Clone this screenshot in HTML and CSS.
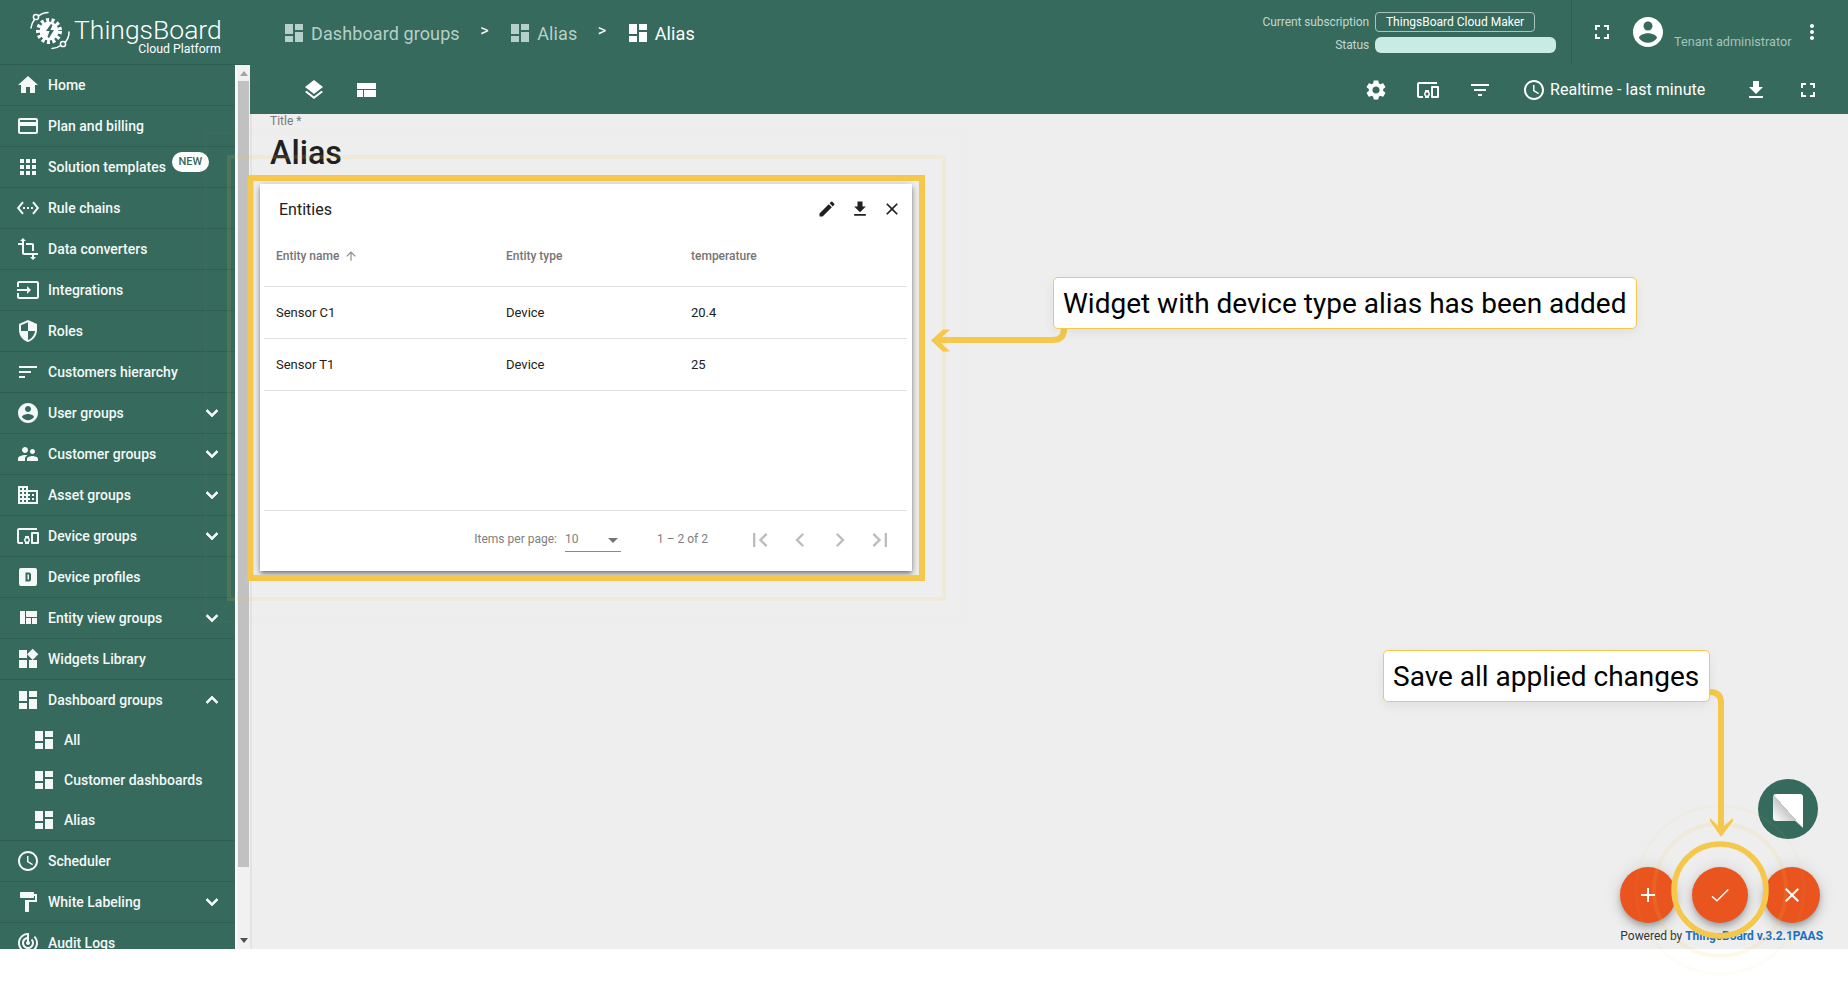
FILE: index.html
```html
<!DOCTYPE html>
<html lang="en">
<head>
<meta charset="utf-8">
<title>ThingsBoard - Alias</title>
<link rel="stylesheet" href="styles.css">
</head>
<body>
<svg class="sprite" aria-hidden="true">
  <symbol id="i-home" viewBox="0 0 24 24"><path d="M10 20v-6h4v6h5v-8h3L12 3 2 12h3v8z"/></symbol>
  <symbol id="i-card" viewBox="0 0 24 24"><path d="M20 4H4c-1.11 0-1.99.89-1.99 2L2 18c0 1.11.89 2 2 2h16c1.11 0 2-.89 2-2V6c0-1.11-.89-2-2-2zm0 14H4v-6h16v6zm0-10H4V6h16v2z"/></symbol>
  <symbol id="i-apps" viewBox="0 0 24 24"><path d="M4 8h4V4H4v4zm6 12h4v-4h-4v4zm-6 0h4v-4H4v4zm0-6h4v-4H4v4zm6 0h4v-4h-4v4zm6-10v4h4V4h-4zm-6 4h4V4h-4v4zm6 6h4v-4h-4v4zm0 6h4v-4h-4v4z"/></symbol>
  <symbol id="i-rule" viewBox="0 0 24 24"><path d="M7.77 6.76L6.23 5.48.82 12l5.41 6.52 1.54-1.28L3.42 12l4.35-5.24zM7 13h2v-2H7v2zm10-2h-2v2h2v-2zm-6 2h2v-2h-2v2zm6.77-7.52l-1.54 1.28L20.58 12l-4.35 5.24 1.54 1.28L23.18 12l-5.41-6.52z"/></symbol>
  <symbol id="i-transform" viewBox="0 0 24 24"><path d="M22 18v-2H8V4h2L7 1 4 4h2v2H2v2h4v8c0 1.1.9 2 2 2h8v2h-2l3 3 3-3h-2v-2h4zM10 8h6v6h2V8c0-1.1-.9-2-2-2h-6v2z"/></symbol>
  <symbol id="i-input" viewBox="0 0 24 24"><path d="M21 3.01H3c-1.1 0-2 .9-2 2V9h2V4.99h18v14.03H3V15H1v4.01c0 1.1.9 1.98 2 1.98h18c1.1 0 2-.88 2-1.98v-14c0-1.11-.9-2-2-2zM11 16l4-4-4-4v3H1v2h10v3z"/></symbol>
  <symbol id="i-security" viewBox="0 0 24 24"><path d="M12 1L3 5v6c0 5.55 3.84 10.74 9 12 5.16-1.26 9-6.45 9-12V5l-9-4zm0 10.99h7c-.53 4.12-3.28 7.79-7 8.94V12H5V6.3l7-3.11v8.8z"/></symbol>
  <symbol id="i-sort" viewBox="0 0 24 24"><path d="M3 18h6v-2H3v2zM3 6v2h18V6H3zm0 7h12v-2H3v2z"/></symbol>
  <symbol id="i-account" viewBox="0 0 24 24"><path d="M12 2C6.48 2 2 6.48 2 12s4.48 10 10 10 10-4.48 10-10S17.52 2 12 2zm0 3c1.66 0 3 1.34 3 3s-1.34 3-3 3-3-1.34-3-3 1.34-3 3-3zm0 14.2c-2.5 0-4.71-1.28-6-3.22.03-1.99 4-3.08 6-3.08 1.99 0 5.97 1.09 6 3.08-1.29 1.94-3.5 3.22-6 3.22z"/></symbol>
  <symbol id="i-super" viewBox="0 0 24 24"><path d="M16.5 12c1.38 0 2.49-1.12 2.49-2.5S17.88 7 16.5 7C15.12 7 14 8.12 14 9.5s1.12 2.5 2.5 2.5zM9 11c1.66 0 2.99-1.34 2.99-3S10.66 5 9 5C7.34 5 6 6.34 6 8s1.34 3 3 3zm7.5 3c-1.83 0-5.5.92-5.5 2.75V19h11v-2.25c0-1.83-3.67-2.75-5.5-2.75zM9 13c-2.33 0-7 1.17-7 3.5V19h7v-2.25c0-.85.33-2.34 2.37-3.47C10.5 13.1 9.66 13 9 13z"/></symbol>
  <symbol id="i-domain" viewBox="0 0 24 24"><path d="M12 7V3H2v18h20V7H10zM6 19H4v-2h2v2zm0-4H4v-2h2v2zm0-4H4V9h2v2zm0-4H4V5h2v2zm4 12H8v-2h2v2zm0-4H8v-2h2v2zm0-4H8V9h2v2zm0-4H8V5h2v2zm10 12h-8v-2h2v-2h-2v-2h2v-2h-2V9h8v10zm-2-8h-2v2h2v-2zm0 4h-2v2h2v-2z"/></symbol>
  <symbol id="i-devices" viewBox="0 0 24 24"><path d="M3 6h18V4H3c-1.1 0-2 .9-2 2v12c0 1.1.9 2 2 2h4v-2H3V6zm10 6H9v1.78c-.61.55-1 1.33-1 2.22s.39 1.67 1 2.22V20h4v-1.78c.61-.55 1-1.34 1-2.22s-.39-1.67-1-2.22V12zm-2 5.5c-.83 0-1.5-.67-1.5-1.5s.67-1.5 1.5-1.5 1.5.67 1.5 1.5-.67 1.5-1.5 1.5zM22 8h-6c-.5 0-1 .5-1 1v10c0 .5.5 1 1 1h6c.5 0 1-.5 1-1V9c0-.5-.5-1-1-1zm-1 10h-4v-8h4v8z"/></symbol>
  <symbol id="i-dbox" viewBox="0 0 24 24"><path fill-rule="evenodd" d="M5 3h14a2 2 0 0 1 2 2v14a2 2 0 0 1-2 2H5a2 2 0 0 1-2-2V5a2 2 0 0 1 2-2zm4.5 4.5v9h3.5a2 2 0 0 0 2-2v-5a2 2 0 0 0-2-2H9.500zm2 2h1.500v5h-1.500v-5z"/></symbol>
  <symbol id="i-quilt" viewBox="0 0 24 24"><path d="M10 18h5v-6h-5v6zm-6 0h5V5H4v13zm12 0h5v-6h-5v6zM10 5v6h11V5H10z"/></symbol>
  <symbol id="i-widgets" viewBox="0 0 24 24"><path d="M13 13v8h8v-8h-8zM3 21h8v-8H3v8zM3 3v8h8V3H3zm13.660-1.310L11 7.340 16.660 13l5.660-5.660-5.660-5.650z"/></symbol>
  <symbol id="i-dash" viewBox="0 0 24 24"><path d="M3 13h8V3H3v10zm0 8h8v-6H3v6zm10 0h8V11h-8v10zm0-18v6h8V3h-8z"/></symbol>
  <symbol id="i-clock" viewBox="0 0 24 24"><path d="M11.990 2C6.470 2 2 6.480 2 12s4.470 10 9.990 10C17.520 22 22 17.520 22 12S17.520 2 11.990 2zM12 20c-4.420 0-8-3.580-8-8s3.580-8 8-8 8 3.580 8 8-3.580 8-8 8zm.5-13H11v6l5.250 3.150.75-1.230-4.500-2.670z"/></symbol>
  <symbol id="i-paint" viewBox="0 0 24 24"><path d="M18 4V3c0-.55-.45-1-1-1H5c-.55 0-1 .45-1 1v4c0 .55.45 1 1 1h12c.55 0 1-.45 1-1V6h1v4H9v11c0 .55.45 1 1 1h2c.55 0 1-.45 1-1v-9h8V4h-3z"/></symbol>
  <symbol id="i-track" viewBox="0 0 24 24"><path d="M19.070 4.930l-1.410 1.410C19.100 7.790 20 9.790 20 12c0 4.420-3.580 8-8 8s-8-3.580-8-8c0-4.080 3.050-7.440 7-7.930v2.020C8.160 6.570 6 9.030 6 12c0 3.310 2.690 6 6 6s6-2.690 6-6c0-1.660-.67-3.160-1.760-4.240l-1.410 1.410C15.550 9.900 16 10.900 16 12c0 2.210-1.790 4-4 4s-4-1.790-4-4c0-1.860 1.280-3.410 3-3.860v2.140c-.6.35-1 .98-1 1.720 0 1.100.9 2 2 2s2-.9 2-2c0-.74-.4-1.380-1-1.720V2h-1C6.480 2 2 6.480 2 12s4.480 10 10 10 10-4.480 10-10c0-2.760-1.120-5.260-2.930-7.070z"/></symbol>
  <symbol id="i-more" viewBox="0 0 24 24"><path d="M16.590 8.590L12 13.170 7.410 8.590 6 10l6 6 6-6z"/></symbol>
  <symbol id="i-less" viewBox="0 0 24 24"><path d="M12 8l-6 6 1.410 1.410L12 10.830l4.590 4.580L18 14z"/></symbol>
  <symbol id="i-layers" viewBox="0 0 24 24"><path d="M11.990 18.540l-7.370-5.730L3 14.070l9 7 9-7-1.630-1.270-7.380 5.740zM12 16l7.360-5.730L21 9l-9-7-9 7 1.630 1.270L12 16z"/></symbol>
  <symbol id="i-compact" viewBox="0 0 24 24"><path d="M3 19h6v-7H3v7zm7 0h12v-7H10v7zM3 5v6h19V5H3z"/></symbol>
  <symbol id="i-settings" viewBox="0 0 24 24"><path d="M19.140 12.940c.04-.3.06-.61.06-.94 0-.32-.02-.64-.07-.94l2.030-1.580c.18-.14.23-.41.12-.61l-1.920-3.320c-.12-.22-.37-.29-.59-.22l-2.390.96c-.5-.38-1.030-.7-1.620-.94l-.36-2.540c-.04-.24-.24-.41-.48-.41h-3.840c-.24 0-.43.17-.47.41l-.36 2.540c-.59.24-1.130.57-1.620.94l-2.390-.96c-.22-.08-.47 0-.59.22L2.740 8.870c-.12.21-.08.47.12.61l2.030 1.580c-.05.3-.09.63-.09.94s.02.64.07.94l-2.030 1.580c-.18.14-.23.41-.12.61l1.920 3.320c.12.22.37.29.59.22l2.390-.96c.5.38 1.030.7 1.620.94l.36 2.540c.05.24.24.41.48.41h3.840c.24 0 .44-.17.47-.41l.36-2.540c.59-.24 1.130-.56 1.620-.94l2.390.96c.22.08.47 0 .59-.22l1.920-3.320c.12-.22.07-.47-.12-.61l-2.010-1.580zM12 15.600c-1.980 0-3.600-1.620-3.600-3.600s1.620-3.600 3.600-3.600 3.600 1.620 3.600 3.600-1.620 3.600-3.600 3.600z"/></symbol>
  <symbol id="i-filter" viewBox="0 0 24 24"><path d="M10 18h4v-2h-4v2zM3 6v2h18V6H3zm3 7h12v-2H6v2z"/></symbol>
  <symbol id="i-download" viewBox="0 0 24 24"><path d="M19 9h-4V3H9v6H5l7 7 7-7zM5 18v2h14v-2H5z"/></symbol>
  <symbol id="i-full" viewBox="0 0 24 24"><path d="M7 14H5v5h5v-2H7v-3zm-2-4h2V7h3V5H5v5zm12 7h-3v2h5v-5h-2v3zM14 5v2h3v3h2V5h-5z"/></symbol>
  <symbol id="i-vert" viewBox="0 0 24 24"><path d="M12 8c1.100 0 2-.9 2-2s-.9-2-2-2-2 .9-2 2 .9 2 2 2zm0 2c-1.100 0-2 .9-2 2s.9 2 2 2 2-.9 2-2-.9-2-2-2zm0 6c-1.100 0-2 .9-2 2s.9 2 2 2 2-.9 2-2-.9-2-2-2z"/></symbol>
  <symbol id="i-edit" viewBox="0 0 24 24"><path d="M3 17.250V21h3.750L17.810 9.940l-3.750-3.750L3 17.250zM20.710 7.040c.39-.39.39-1.020 0-1.410l-2.340-2.340c-.39-.39-1.020-.39-1.410 0l-1.830 1.830 3.750 3.750 1.830-1.830z"/></symbol>
  <symbol id="i-close" viewBox="0 0 24 24"><path d="M19 6.410L17.590 5 12 10.590 6.410 5 5 6.410 10.590 12 5 17.590 6.410 19 12 13.410 17.590 19 19 17.590 13.410 12z"/></symbol>
  <symbol id="i-add" viewBox="0 0 24 24"><path d="M19 13h-6v6h-2v-6H5v-2h6V5h2v6h6v2z"/></symbol>
  <symbol id="i-check" viewBox="0 0 24 24"><path d="M9 16.800L4.400 12.800l-.9 1.100L9 18.800 20.800 7l-1-1z"/></symbol>
  <symbol id="i-first" viewBox="0 0 24 24"><path d="M18.410 16.590L13.820 12l4.590-4.590L17 6l-6 6 6 6zM6 6h2v12H6z"/></symbol>
  <symbol id="i-prev" viewBox="0 0 24 24"><path d="M15.410 7.410L14 6l-6 6 6 6 1.410-1.410L10.830 12z"/></symbol>
  <symbol id="i-next" viewBox="0 0 24 24"><path d="M10 6L8.590 7.410 13.170 12l-4.580 4.580L10 18l6-6z"/></symbol>
  <symbol id="i-last" viewBox="0 0 24 24"><path d="M5.590 7.410L10.180 12l-4.590 4.590L7 18l6-6-6-6zM16 6h2v12h-2z"/></symbol>
  <symbol id="i-up" viewBox="0 0 24 24"><path d="M4 12l1.410 1.410L11 7.830V20h2V7.830l5.580 5.590L20 12l-8-8-8 8z"/></symbol>
</svg>

<div class="app">
  <aside class="sidebar">
    <div class="brand">
      <svg class="logo" viewBox="0 0 40 40">
        <g fill="none" stroke="#fff">
          <circle cx="6" cy="6" r="2.600" stroke-width="1.500"/>
          <path d="M8.500 5C11 3 14 1.500 18 1.500M4.500 8.500C2.500 11 1.500 14 1 17" stroke-width="1.500" stroke-linecap="round"/>
          <circle cx="33" cy="33" r="2.600" stroke-width="1.500"/>
          <path d="M30.500 34.500C28 36.500 25 37.500 22 37.500M35.500 31C38 28 39 24.500 39 21" stroke-width="1.500" stroke-linecap="round"/>
          <circle cx="19" cy="20" r="11" stroke-width="4" stroke-dasharray="3 2.400"/>
        </g>
        <circle cx="19" cy="20" r="9.500" fill="#fff"/>
        <path d="M21 13l-5 7h3.500l-2 6 1.500 1 5-8h-3.500l2-5z" fill="#356a5c"/>
      </svg>
      <div class="brand-text">
        <span class="brand-name">ThingsBoard</span>
        <span class="brand-sub">Cloud Platform</span>
      </div>
    </div>
    <div class="side-body">
      <nav class="menu">
        <a class="row"><svg class="ic"><use href="#i-home"/></svg><span>Home</span></a>
        <a class="row"><svg class="ic"><use href="#i-card"/></svg><span>Plan and billing</span></a>
        <a class="row"><svg class="ic"><use href="#i-apps"/></svg><span>Solution templates</span><b class="new">NEW</b></a>
        <a class="row"><svg class="ic"><use href="#i-rule"/></svg><span>Rule chains</span></a>
        <a class="row"><svg class="ic"><use href="#i-transform"/></svg><span>Data converters</span></a>
        <a class="row"><svg class="ic"><use href="#i-input"/></svg><span>Integrations</span></a>
        <a class="row"><svg class="ic"><use href="#i-security"/></svg><span>Roles</span></a>
        <a class="row"><svg class="ic"><use href="#i-sort"/></svg><span>Customers hierarchy</span></a>
        <a class="row"><svg class="ic"><use href="#i-account"/></svg><span>User groups</span><svg class="ic chev"><use href="#i-more"/></svg></a>
        <a class="row"><svg class="ic"><use href="#i-super"/></svg><span>Customer groups</span><svg class="ic chev"><use href="#i-more"/></svg></a>
        <a class="row"><svg class="ic"><use href="#i-domain"/></svg><span>Asset groups</span><svg class="ic chev"><use href="#i-more"/></svg></a>
        <a class="row"><svg class="ic"><use href="#i-devices"/></svg><span>Device groups</span><svg class="ic chev"><use href="#i-more"/></svg></a>
        <a class="row"><svg class="ic"><use href="#i-dbox"/></svg><span>Device profiles</span></a>
        <a class="row"><svg class="ic"><use href="#i-quilt"/></svg><span>Entity view groups</span><svg class="ic chev"><use href="#i-more"/></svg></a>
        <a class="row"><svg class="ic"><use href="#i-widgets"/></svg><span>Widgets Library</span></a>
        <a class="row row-open"><svg class="ic"><use href="#i-dash"/></svg><span>Dashboard groups</span><svg class="ic chev"><use href="#i-less"/></svg></a>
        <div class="sub">
          <a class="subrow"><svg class="ic"><use href="#i-dash"/></svg><span>All</span></a>
          <a class="subrow"><svg class="ic"><use href="#i-dash"/></svg><span>Customer dashboards</span></a>
          <a class="subrow"><svg class="ic"><use href="#i-dash"/></svg><span>Alias</span></a>
        </div>
        <a class="row"><svg class="ic"><use href="#i-clock"/></svg><span>Scheduler</span></a>
        <a class="row"><svg class="ic"><use href="#i-paint"/></svg><span>White Labeling</span><svg class="ic chev"><use href="#i-more"/></svg></a>
        <a class="row"><svg class="ic"><use href="#i-track"/></svg><span>Audit Logs</span></a>
      </nav>
      <div class="scrollbar">
        <i class="sb-up"></i>
        <i class="sb-thumb"></i>
        <i class="sb-down"></i>
      </div>
    </div>
  </aside>

  <main class="main">
    <header class="topbar">
      <div class="crumbs">
        <span class="crumb"><svg class="ic"><use href="#i-dash"/></svg>Dashboard groups</span>
        <span class="sep">&gt;</span>
        <span class="crumb"><svg class="ic"><use href="#i-dash"/></svg>Alias</span>
        <span class="sep">&gt;</span>
        <span class="crumb crumb-on"><svg class="ic"><use href="#i-dash"/></svg>Alias</span>
      </div>
      <div class="subscr">
        <span class="subscr-label">Current subscription</span>
        <span class="subscr-badge">ThingsBoard Cloud Maker</span>
        <span class="subscr-label">Status</span>
        <span class="subscr-bar"></span>
      </div>
      <div class="userbox">
        <svg class="ic"><use href="#i-full"/></svg>
        <svg class="avatar"><use href="#i-account"/></svg>
        <span class="role">Tenant administrator</span>
        <svg class="ic"><use href="#i-vert"/></svg>
      </div>
    </header>
    <div class="toolbar">
      <div class="tools-left">
        <span class="tool"><svg class="ic"><use href="#i-layers"/></svg></span>
        <span class="tool"><svg class="ic"><use href="#i-compact"/></svg></span>
      </div>
      <div class="tools-right">
        <span class="tool"><svg class="ic"><use href="#i-settings"/></svg></span>
        <span class="tool"><svg class="ic"><use href="#i-devices"/></svg></span>
        <span class="tool"><svg class="ic"><use href="#i-filter"/></svg></span>
        <span class="timewindow"><svg class="ic"><use href="#i-clock"/></svg>Realtime - last minute</span>
        <span class="tool"><svg class="ic"><use href="#i-download"/></svg></span>
        <span class="tool"><svg class="ic"><use href="#i-full"/></svg></span>
      </div>
    </div>
    <section class="canvas">
      <div class="title-label">Title *</div>
      <h1 class="title">Alias</h1>
      <article class="widget">
        <div class="widget-head">
          <span class="widget-title">Entities</span>
          <span class="widget-actions">
            <svg class="ic"><use href="#i-edit"/></svg>
            <svg class="ic"><use href="#i-download"/></svg>
            <svg class="ic"><use href="#i-close"/></svg>
          </span>
        </div>
        <div class="table">
          <div class="tr th">
            <span class="td">Entity name<svg class="sort"><use href="#i-up"/></svg></span>
            <span class="td">Entity type</span>
            <span class="td">temperature</span>
          </div>
          <div class="tr">
            <span class="td">Sensor C1</span>
            <span class="td">Device</span>
            <span class="td">20.4</span>
          </div>
          <div class="tr">
            <span class="td">Sensor T1</span>
            <span class="td">Device</span>
            <span class="td">25</span>
          </div>
        </div>
        <div class="pager">
          <span class="pager-label">Items per page:</span>
          <span class="pager-select"><span>10</span><i class="caret"></i></span>
          <span class="pager-range">1 – 2 of 2</span>
          <span class="pager-btn"><svg class="ic"><use href="#i-first"/></svg></span>
          <span class="pager-btn"><svg class="ic"><use href="#i-prev"/></svg></span>
          <span class="pager-btn"><svg class="ic"><use href="#i-next"/></svg></span>
          <span class="pager-btn"><svg class="ic"><use href="#i-last"/></svg></span>
        </div>
      </article>
      <div class="chat">
        <svg viewBox="0 0 30 34" class="chat-ic">
          <defs>
            <linearGradient id="bubble" x1="1" y1="0" x2="0" y2="1">
              <stop offset="0" stop-color="#fff"/>
              <stop offset="0.5" stop-color="#fff"/>
              <stop offset="0.5" stop-color="#c6c6c6"/>
              <stop offset="0.85" stop-color="#fafafa"/>
              <stop offset="1" stop-color="#fff"/>
            </linearGradient>
          </defs>
          <path d="M3 0h24a3 3 0 0 1 3 3v31l-8-7H3a3 3 0 0 1-3-3V3a3 3 0 0 1 3-3z" fill="url(#bubble)"/>
        </svg>
      </div>
      <div class="fabs">
        <span class="fab"><svg class="ic"><use href="#i-add"/></svg></span>
        <span class="fab"><svg class="ic"><use href="#i-check"/></svg></span>
        <span class="fab"><svg class="ic"><use href="#i-close"/></svg></span>
      </div>
      <div class="powered">Powered by <a>ThingsBoard v.3.2.1PAAS</a></div>
    </section>
  </main>
</div>

<svg class="marks" viewBox="0 0 1848 982" aria-hidden="true">
  <rect class="glow-1" x="229" y="157" width="715" height="442"/>
  <rect class="glow-2" x="206" y="133" width="760" height="489"/>
  <rect class="frame" x="250.500" y="178" width="671.500" height="400"/>
  <path class="line" d="M1064 329q0 11-11 11H938"/>
  <polygon class="head" points="931,340.500 943,329.500 950,329.500 941,338 941,343 950,351.500 943,351.500"/>
  <path class="line" d="M1710 692q11 0 11 11V826"/>
  <polygon class="head" points="1721,837 1710,821 1710,818 1718,826 1724,826 1733,818 1733,821"/>
  <circle class="ring" cx="1720" cy="890" r="46"/>
  <circle class="ring-2" cx="1720" cy="890" r="66"/>
  <circle class="ring-3" cx="1720" cy="890" r="84"/>
</svg>
<div class="callout callout-a">Widget with device type alias has been added</div>
<div class="callout callout-b">Save all applied changes</div>
</body>
</html>
```

FILE: styles.css
```css
* { box-sizing: border-box; }
html, body { margin: 0; height: 982px; overflow: hidden; background: #fff; }
body { position: relative; font-family: Roboto, "Liberation Sans", sans-serif; color: #212121; }
.sprite { display: none; }
.ic { width: 24px; height: 24px; fill: currentColor; flex: none; display: block; }

.app { display: flex; height: 949px; overflow: hidden; }

/* Sidebar */
.sidebar { width: 250px; flex: none; display: flex; flex-direction: column; background: #356a5c; color: #fff; }
.brand { height: 65px; flex: none; display: flex; padding: 11px 0 0 30px; border-bottom: 1px solid #2f5f52; }
.logo { width: 40px; height: 40px; flex: none; }
.brand-text { display: flex; flex-direction: column; align-items: flex-end; margin-left: 4px; padding-top: 4px; }
.brand-name { font-size: 26.500px; line-height: 30px; font-weight: 300; }
.brand-sub { font-size: 12.300px; line-height: 12px; margin-top: -2px; margin-right: 1px; }
.side-body { flex: 1; display: flex; min-height: 0; }
.menu { width: 235px; flex: none; overflow: hidden; }
.row { height: 41px; display: flex; align-items: center; padding-left: 16px; border-bottom: 1px solid #2f5f52; font-size: 14px; font-weight: 500; color: #f4f8f7; }
.row > span { margin-left: 8px; }
.row-open { height: 40px; border-bottom: 0; }
.chev { margin-left: auto; margin-right: 11px; stroke: currentColor; stroke-width: .8; }
.new { align-self: flex-start; margin: 5px 0 0 6px; padding: 0 6.500px; height: 20px; border-radius: 10px; background: #fff; color: #356a5c; font-size: 11px; line-height: 20px; font-weight: 500; }
.sub { border-bottom: 1px solid #2f5f52; }
.subrow { height: 40px; display: flex; align-items: center; padding-left: 32px; font-size: 14px; font-weight: 500; color: #f4f8f7; }
.subrow > span { margin-left: 8px; }
.scrollbar { width: 15px; flex: none; display: flex; flex-direction: column; align-items: center; background: #f1f1f1; border-left: 2px solid #fff; }
.sb-up { margin-top: 6px; border: 4px solid transparent; border-top: 0; border-bottom: 5px solid #a3a3a3; }
.sb-thumb { width: 11px; height: 786px; margin-top: 5px; background: #c1c1c1; }
.sb-down { margin-top: 71px; border: 4px solid transparent; border-bottom: 0; border-top: 5px solid #505050; }

/* Top */
.main { flex: 1; min-width: 0; display: flex; flex-direction: column; }
.topbar { height: 64px; flex: none; display: flex; background: #356a5c; color: #fff; }
.crumbs { display: flex; align-items: center; padding-left: 32px; font-size: 18px; letter-spacing: .1px; color: #b5d0c9; }
.crumb { display: flex; align-items: center; gap: 5px; line-height: 24px; padding-top: 3px; }
.crumb .ic { margin-top: -2px; }
.crumb-on { color: #fff; }
.sep { margin: -3px 19.500px 0 20.500px; font-size: 16px; line-height: 16px; color: #fff; }
.subscr { margin-left: auto; display: grid; grid-template-columns: auto 181px; grid-template-rows: 20px 16px; column-gap: 6px; row-gap: 5px; padding-top: 12px; align-content: start; align-items: center; font-size: 12px; }
.subscr-label { text-align: right; color: #c3d6d1; letter-spacing: -.1px; }
.subscr-badge { justify-self: start; width: 160px; height: 20px; border: 1px solid #a8c4bd; border-radius: 4px; text-align: center; line-height: 18px; color: #fff; }
.subscr-bar { height: 16px; border-radius: 6px; background: #c8ebe2; }
.userbox { width: 277px; margin-left: 15px; display: flex; align-items: center; padding-left: 18px; border-left: 1px solid #2f5f52; }
.avatar { width: 36px; height: 36px; fill: #fff; margin-left: 16px; flex: none; }
.role { margin-left: 8px; width: 126px; padding-top: 19px; font-size: 12.700px; color: #a5c2bb; white-space: nowrap; }

.toolbar { height: 50px; flex: none; display: flex; justify-content: space-between; align-items: center; padding: 1px 14px 0 38px; background: #356a5c; color: #fff; }
.tools-left, .tools-right { display: flex; align-items: center; }
.tool { width: 52px; display: flex; justify-content: center; }
.timewindow { width: 224px; display: flex; align-items: center; gap: 4px; padding-left: 16px; font-size: 16px; letter-spacing: .05px; }

/* Canvas */
.canvas { position: relative; flex: 1; min-height: 0; background: #eee; padding: 1px 0 0 10px; border-left: 2px solid #e3e3e3; }
.title-label { margin-left: 8px; font-size: 12px; line-height: 12px; color: #7a7a7a; }
.title { margin: 4px 0 0 8px; font-size: 32.300px; line-height: 44px; height: 53px; font-weight: 500; color: #212121; }
.widget { margin-left: -2px; width: 652px; height: 387px; background: #fff; display: flex; flex-direction: column; box-shadow: 0 2px 4px -1px rgba(0,0,0,.35), 0 4px 5px rgba(0,0,0,.2), 0 1px 10px rgba(0,0,0,.16); }
.widget-head { height: 50px; flex: none; display: flex; align-items: center; justify-content: space-between; padding: 0 10px 0 19px; }
.widget-title { font-size: 16px; color: #212121; }
.widget-actions { display: flex; gap: 12.500px; color: #212121; }
.widget-actions .ic { width: 20px; height: 20px; }
.table { flex: 1; margin: 0 5px 0 4px; font-size: 13px; }
.tr { height: 52px; display: grid; grid-template-columns: 230px 185px 1fr; padding-left: 12px; align-items: center; border-bottom: 1px solid #e0e0e0; color: #212121; }
.th { height: 53px; padding-bottom: 9px; font-size: 12px; color: #757575; font-weight: 500; }
.th .td { display: flex; align-items: center; }
.sort { width: 14px; height: 14px; margin-left: 5px; fill: #8a8a8a; }
.pager { margin: 0 5px 0 4px; height: 61px; flex: none; display: flex; align-items: center; justify-content: flex-end; border-top: 1px solid #e0e0e0; padding: 0 7px 3px 0; font-size: 12px; color: #808080; }
.pager-label { margin: -2px 8px 0 0; }
.pager-select { width: 56px; height: 22px; display: flex; align-items: center; justify-content: space-between; padding: 0 3px 3px 0; border-bottom: 1px solid #8a8a8a; margin-top: 3px; }
.caret { border: 5px solid transparent; border-bottom: 0; border-top: 5px solid #757575; margin-top: 3px; }
.pager-range { margin: -2px 32px 0 36px; }
.pager-btn { width: 40px; display: flex; justify-content: center; color: #bdbdbd; }
.pager-btn .ic { width: 28px; height: 28px; }

/* Floating */
.chat { position: absolute; right: 30px; bottom: 110px; width: 60px; height: 60px; border-radius: 50%; background: #356a5c; display: flex; align-items: center; justify-content: center; }
.chat-ic { width: 30px; height: 34px; margin-top: 3px; }
.fabs { position: absolute; right: 28px; bottom: 26px; display: flex; gap: 16px; }
.fab { width: 56px; height: 56px; border-radius: 50%; background: #e9541f; color: #fff; display: flex; align-items: center; justify-content: center; box-shadow: 0 3px 5px -1px rgba(0,0,0,.2), 0 6px 10px rgba(0,0,0,.14), 0 1px 18px rgba(0,0,0,.12); }
.powered { position: absolute; right: 25px; bottom: 6px; font-size: 12px; line-height: 14px; letter-spacing: -.03px; color: #333; }
.powered a { color: #1a6ec5; font-weight: 700; }

/* Guide marks */
.marks { position: absolute; left: 0; top: 0; width: 1848px; height: 982px; fill: none; pointer-events: none; }
.frame { stroke: #f5c84c; stroke-width: 6; }
.glow-1 { stroke: #f5c84c; stroke-width: 4; opacity: .12; }
.glow-2 { stroke: #f5c84c; stroke-width: 2; opacity: .025; }
.line { stroke: #f5c84c; stroke-width: 6; }
.head { fill: #f5c84c; }
.ring { stroke: #f5c84c; stroke-width: 5.500; }
.ring-2 { stroke: #f5c84c; stroke-width: 4; opacity: .13; }
.ring-3 { stroke: #f5c84c; stroke-width: 3; opacity: .05; }
.callout { position: absolute; height: 52px; display: flex; align-items: center; padding: 0 9px; background: #fff; border: 1px solid #f5c84c; border-radius: 5px; font-size: 28px; color: #000; white-space: nowrap; box-shadow: 0 4px 12px rgba(0,0,0,.06); }
.callout-a { left: 1053px; top: 277px; width: 584px; }
.callout-b { left: 1383px; top: 650px; width: 327px; }
```
